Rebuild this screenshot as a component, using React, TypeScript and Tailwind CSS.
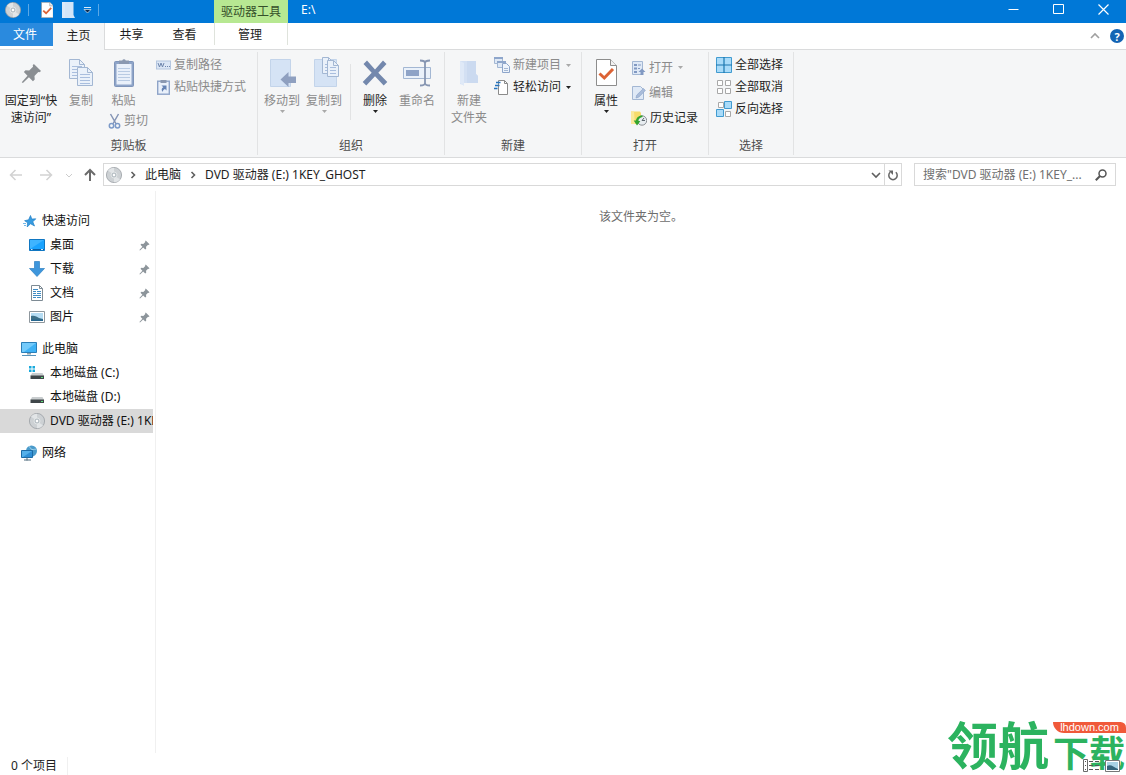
import React from "react";

type Kids = { children?: React.ReactNode };

function Svg({ w, h, children }: Kids & { w: number; h: number }) {
  return (
    <svg width={w} height={h} viewBox={`0 0 ${w} ${h}`} className="block shrink-0" aria-hidden="true">
      {children}
    </svg>
  );
}

/* ---------- icons ---------- */

function Disc() {
  return (
    <Svg w={16} h={16}>
      <circle cx="8" cy="8" r="7.6" fill="#cdd1d4" stroke="#9aa0a4" strokeWidth="0.8" />
      <path d="M8 8 2 3.600A7.300 7.300 0 0 1 8 .8zM8 8l6 4.600A7.300 7.300 0 0 1 8 15.200z" fill="#e2e5e7" />
      <circle cx="8" cy="8" r="3" fill="#b9c1c6" stroke="#eef0f1" strokeWidth="0.700" />
      <circle cx="8" cy="8" r="1.200" fill="#fff" />
    </Svg>
  );
}

function Pin({ size, color }: { size: number; color: string }) {
  return (
    <svg width={size} height={size} viewBox="0 0 22 22" className="block shrink-0" aria-hidden="true">
      <path d="M13.500 1 21 8.400l-1.600 1.400-1.300-.3-4 4 .3 3.800-1.900 1.700-4.200-4.200L2 21l-1.200-.9 6-6.700L3 9.500 4.700 7.700l3.900.2 4-3.900-.3-1.600z" fill={color} />
    </svg>
  );
}

function Page({ x, y, w, h }: { x: number; y: number; w: number; h: number }) {
  const lines = [];
  for (let i = y + 7; i < y + h - 2; i += 3) lines.push(i);
  return (
    <g>
      <path d={`M${x + 0.5} ${y + 0.5}h${w - 6}l5 5v${h - 6}h-${w - 1}z`} fill="#eaf1fa" stroke="#a3b7d3" />
      <path d={`M${x + w - 5.5} ${y + 0.5}v5h5`} fill="none" stroke="#a3b7d3" />
      {lines.map((l) => (
        <path key={l} d={`M${x + 3} ${l + 0.5}h${w - 6}`} stroke="#a9bede" />
      ))}
    </g>
  );
}

function CopyIcon() {
  return (
    <Svg w={26} h={32}>
      <Page x={1} y={2} w={16} h={20} />
      <Page x={9} y={10} w={16} h={19} />
    </Svg>
  );
}

function ClipboardIcon() {
  return (
    <Svg w={22} h={32}>
      <rect x="1.500" y="4.500" width="19" height="25" rx="1" fill="#8ea4c8" stroke="#7f95ba" />
      <rect x="3.500" y="7" width="15" height="20.500" fill="#e9f0fa" />
      <path d="M6 7V3.500h3.200a2 2 0 0 1 3.600 0H16V7z" fill="#8a98b0" />
      <path d="M5 11.500h12M5 14.500h12M5 17.500h12M5 20.500h12M5 23.500h12" stroke="#b9cbe3" />
    </Svg>
  );
}

function ScissorsIcon() {
  return (
    <Svg w={13} h={16}>
      <path d="M2.500 1 8.200 11M10.500 1 4.800 11" stroke="#8494b5" strokeWidth="1.500" />
      <circle cx="3.500" cy="12.700" r="2.200" fill="none" stroke="#7c9ac8" strokeWidth="1.500" />
      <circle cx="9.500" cy="12.700" r="2.200" fill="none" stroke="#7c9ac8" strokeWidth="1.500" />
    </Svg>
  );
}

function PathIcon() {
  return (
    <Svg w={15} h={16}>
      <rect x=".5" y="4" width="14" height="8" fill="#dbe6f5" stroke="#b4c6df" />
      <path d="M2 6l1.500 4L5 6l1.500 4L8 6" fill="none" stroke="#6f86ad" />
      <path d="M9 9.500h1M11 9.500h1M13 9.500h1" stroke="#6f86ad" />
    </Svg>
  );
}

function PasteShortcutIcon() {
  return (
    <Svg w={15} h={16}>
      <rect x="1.700" y="2.200" width="11.600" height="13" fill="#e9f0fa" stroke="#8ea4c8" strokeWidth="1.400" />
      <path d="M4.500 1h6v3h-6z" fill="#8a98b0" />
      <path d="M5.500 6.500h5v5L9 10c-1.500.6-2.200 1.600-2.300 3C5 11 5.500 9.200 7.300 8.300z" fill="#6583b4" />
    </Svg>
  );
}

function MoveIcon() {
  return (
    <Svg w={32} h={32}>
      <path d="M4.500 2.500h20v27h-20z" fill="#d5e3f5" stroke="#c3d4ea" />
      <path d="m14.500 22.500 8-7.500v4.500H30v6.500h-7.500v4z" fill="#8fa0c0" />
    </Svg>
  );
}

function CopyToIcon() {
  return (
    <Svg w={32} h={32}>
      <path d="M6.500 2.500h22v27h-22z" fill="#d5e3f5" stroke="#c3d4ea" />
      <Page x={14} y={0} w={12} h={17} />
      <Page x={19} y={3} w={12} h={17} />
    </Svg>
  );
}

function DeleteIcon() {
  return (
    <Svg w={28} h={32}>
      <path d="M2.500 7 6 3.500l8 9 8-9L25.500 7l-8.200 8.800 9 9.200-3.600 3.500L14 19.300l-8.700 9.200L1.700 25l9-9.200z" fill="#7388ad" />
    </Svg>
  );
}

function RenameIcon() {
  return (
    <Svg w={28} h={32}>
      <path d="M.5 10.500h27v11H.5z" fill="#eaf1fa" stroke="#a3b7d3" />
      <path d="M3 13h13v6H3z" fill="#8ea3c7" />
      <path d="M17 3.500c3 0 5 .5 5 2.500v20c0 2-2 2.500-5 2.500M27 3.500c-3 0-5 .5-5 2.500v20c0 2 2 2.500 5 2.500" fill="none" stroke="#8796b2" strokeWidth="1.800" />
    </Svg>
  );
}

function NewFolderIcon() {
  return (
    <Svg w={22} h={32}>
      <path d="M2 4h16v13l2 2v7H6v2l-4-1z" fill="#d3e0f3" />
      <path d="M9 4h9v13l2 2v7H9z" fill="#cbdaf0" />
      <path d="M2 4l4 2v23l-4-3z" fill="#dfe9f7" />
    </Svg>
  );
}

function NewItemIcon() {
  return (
    <Svg w={16} h={16}>
      <path d="M.5.5h8v6h-8z" fill="#dfe9f6" stroke="#a3b7d3" />
      <path d="M0 1h9" stroke="#8ea6cb" strokeWidth="2" />
      <path d="M3.500 4.500h8v6h-8z" fill="#dfe9f6" stroke="#a3b7d3" />
      <path d="M3 5h9" stroke="#8ea6cb" strokeWidth="2" />
      <path d="M8.500 6.500h4l3 3v6h-7z" fill="#edf3fb" stroke="#8ea6cb" />
      <path d="M10 11.500h4M10 13.500h4" stroke="#a3b7d3" />
    </Svg>
  );
}

function EasyAccessIcon() {
  return (
    <Svg w={16} h={16}>
      <path d="M4.500 1.500h6l3 3v11h-9z" fill="#fff" stroke="#8b8b8b" />
      <path d="M10.500 1.500v3h3" fill="none" stroke="#8b8b8b" />
      <path d="M2 3.500h4.500M1 6.500h4.500M0 9.500h3.500" stroke="#2673bd" strokeWidth="1.500" />
    </Svg>
  );
}

function Check({ small }: { small?: boolean }) {
  return (
    <svg width={small ? 13 : 24} height={small ? 16 : 32} viewBox={small ? "0 2 22 27" : "0 0 24 32"} className="block shrink-0" aria-hidden="true">
      <path d="M2.500 2.500h14l6 6v20h-20z" fill="#fff" stroke="#8d8d8d" />
      <path d="M16.500 2.500v6h6" fill="#f1f1f1" stroke="#8d8d8d" />
      <path d="m5.500 16.500 4.800 4.500L19 12" fill="none" stroke="#dc6234" strokeWidth="3" />
    </svg>
  );
}

function OpenIcon() {
  return (
    <Svg w={15} h={16}>
      <path d="M1.500 1.500h10v13h-10z" fill="#dfe9f6" stroke="#a3b7d3" />
      <path d="M3 4h3v2H3zM3 7.500h3v2H3zM3 11h3v2H3z" fill="#8199c2" />
      <path d="M7 5h3M7 8.500h2" stroke="#8199c2" />
      <path d="M11 8.500 14.500 12H12.500v3h-3v-3h-2z" fill="#8199c2" />
    </Svg>
  );
}

function EditIcon() {
  return (
    <Svg w={15} h={16}>
      <path d="M1.500 1.500h8l3 3v10h-11z" fill="#dfe9f6" stroke="#a3b7d3" />
      <path d="m5 13 .8-3 6.700-6.500 1.800 2-6.500 6.600z" fill="#a9bcda" stroke="#8ea6cb" strokeWidth=".7" />
    </Svg>
  );
}

function HistoryIcon() {
  return (
    <Svg w={16} h={16}>
      <path d="M0 1.500h9l1 1.500v11H0z" fill="#f7dc6b" />
      <path d="M0 1.500h3l1 12.500H0z" fill="#fbe99a" />
      <circle cx="11" cy="10.500" r="4.700" fill="#e8edf1" stroke="#8a8f94" />
      <path d="M11 10.500 13 8M11 10.500h3" stroke="#5e6870" />
      <path d="M11.500 5.500C7.500 5.500 5.300 8 5 10.500H2.700L6 15.500l3.300-4.200-2-.6c.6-2 2-3.300 4.200-3.700z" fill="#33a42f" />
    </Svg>
  );
}

function SelectIcon({ kind }: { kind: "all" | "none" | "invert" }) {
  if (kind === "all")
    return (
      <Svg w={16} h={16}>
        <path d="M.5.5h15v15H.5z" fill="#a9dbf9" stroke="#419bd0" />
        <path d="M8 0v16M0 8h16" stroke="#1c77b0" strokeWidth="1.200" />
      </Svg>
    );
  if (kind === "none")
    return (
      <Svg w={16} h={16}>
        <path d="M1.500 1.500h5v5h-5zM9.500 1.500h5v5h-5zM1.500 9.500h5v5h-5zM9.500 9.500h5v5h-5z" fill="#fff" stroke="#a8a8a8" />
      </Svg>
    );
  return (
    <Svg w={16} h={16}>
      <path d="M2.500 1.500h5v5h-5zM9.500 10.500h5v5h-5z" fill="#fff" stroke="#a8a8a8" />
      <path d="M8.500.5h7v7h-7zM.5 8.500h7v7h-7z" fill="#a9dbf9" stroke="#419bd0" />
    </Svg>
  );
}

function Caret({ dim }: { dim?: boolean }) {
  return (
    <Svg w={5} h={3}>
      <path d="M0 0h5L2.500 3z" fill={dim ? "#a9a9a9" : "#222"} />
    </Svg>
  );
}

function Star() {
  return (
    <Svg w={16} h={16}>
      <path d="m9.500 2.500 1.300 3.600 4-.3-3 3 1.700 4.200-4-2.300-3.300 3.300.4-4.300-3-2 4-.9z" fill="#379be0" stroke="#2380c6" strokeWidth=".7" />
      <path d="M2 10.500h3M3 12.500h2" stroke="#74b8e8" />
    </Svg>
  );
}

function DesktopIcon() {
  return (
    <Svg w={16} h={16}>
      <path d="M.5 2.500h15v11H.5z" fill="#1aa3ff" stroke="#1177c2" />
      <path d="M1 3h14L1 12z" fill="#3fb4ff" />
      <path d="M1 12.500h14" stroke="#0b5fa5" />
      <path d="M2 12.500h1.500M12 12.500h2" stroke="#cfeaff" />
    </Svg>
  );
}

function DownloadIcon() {
  return (
    <Svg w={16} h={16}>
      <path d="M5.500.5h5v7h5L8 15.500.5 7.500h5z" fill="#3e96dc" stroke="#2d7fc1" strokeWidth=".7" />
    </Svg>
  );
}

function DocIcon() {
  return (
    <Svg w={16} h={16}>
      <path d="M2.500.5h8l3 3v12h-11z" fill="#fff" stroke="#7e8b94" />
      <path d="M10.500.5v3h3" fill="none" stroke="#7e8b94" />
      <path d="M4 4.500h5M4 6.500h3M8 6.500h4M4 8.500h3M8 8.500h4M4 10.500h8M4 12.500h3M8 12.500h4" stroke="#3f8cc4" />
    </Svg>
  );
}

function PictureIcon() {
  return (
    <Svg w={16} h={16}>
      <path d="M.5 2.500h15v11H.5z" fill="#fff" stroke="#8e979d" />
      <path d="M2 4h12v8H2z" fill="#b5dcf3" />
      <path d="M2 7c3-1 6 .5 8 2l4 1v2H2z" fill="#3c6f87" />
      <path d="M2 10.500h12V12H2z" fill="#27678f" />
    </Svg>
  );
}

function PcIcon() {
  return (
    <Svg w={16} h={16}>
      <path d="M.5 1.500h15v10H.5z" fill="#3fb2f5" stroke="#2b7fb8" />
      <path d="M1 2h14L3 11H1z" fill="#74cbfb" />
      <path d="M6 12h4v1.500H6z" fill="#8da0ab" />
      <path d="M1 14.500h14" stroke="#5793ba" />
    </Svg>
  );
}

function DriveIcon({ windows }: { windows?: boolean }) {
  return (
    <Svg w={16} h={16}>
      {windows && <path d="M0 1h2.500v2.500H0zM3.500 1H6v2.500H3.500zM0 4.500h2.500V7H0zM3.500 4.500H6V7H3.500z" fill="#19a9dc" />}
      <path d="M3 8h10.500l1.500 3H1.500z" fill="#c9cdcf" />
      <path d="M1.500 10.500H15V14H1.500z" fill="#3f4649" />
      <path d="M12 12.500h2" stroke="#5fe07a" />
    </Svg>
  );
}

function NetworkIcon() {
  return (
    <Svg w={16} h={16}>
      <circle cx="10.500" cy="6" r="5.500" fill="#4a9bcb" />
      <path d="M8 1.500c2 1 1 2.500 3 3s3-1 4 0" stroke="#a5d3ea" fill="none" />
      <path d="M.5 5.500h11v7H.5z" fill="#2f8fd6" stroke="#1d6ba6" />
      <path d="M1 6h10l-9 6H1z" fill="#55b0ea" />
      <path d="M6 12.500v3M3 15h7" stroke="#506c7e" />
    </Svg>
  );
}

function Chevron({ dir, color = "#5f5f5f" }: { dir: "right" | "down" | "up"; color?: string }) {
  const d = dir === "right" ? "m3.500 2 3 3-3 3" : dir === "down" ? "m1 3 4 4 4-4" : "m1 7 4-4 4 4";
  return (
    <Svg w={10} h={10}>
      <path d={d} fill="none" stroke={color} strokeWidth="1.600" />
    </Svg>
  );
}

function Arrow({ dir, color }: { dir: "left" | "right" | "up"; color: string }) {
  const d = {
    left: "M13 7H1.500M6.500 2l-5 5 5 5",
    right: "M1 7h11.500M7.500 2l5 5-5 5",
    up: "M7 13V2M2 7l5-5 5 5",
  }[dir];
  return (
    <Svg w={14} h={14}>
      <path d={d} fill="none" stroke={color} strokeWidth={dir === "up" ? 2 : 1.500} />
    </Svg>
  );
}

/* ---------- ribbon ---------- */

function Group({ label, width, children }: Kids & { label: string; width: string }) {
  return (
    <section aria-label={label} className={`${width} my-[2px] flex shrink-0 flex-col border-r border-[#e2e3e4]`}>
      <div className="flex h-[86px] items-start">{children}</div>
      <div className="text-center leading-4 text-[#4c4c4c]">{label}</div>
    </section>
  );
}

function Big({ icon, lines, width, dim, caret }: { icon: React.ReactNode; lines: string[]; width: string; dim?: boolean; caret?: boolean }) {
  return (
    <button type="button" className={`${width} ${dim ? "text-[#8b8b8b]" : "text-[#1e1e1e]"} flex shrink-0 flex-col items-center pt-[5px]`}>
      {icon}
      <span className="mt-[3px] flex flex-col items-center leading-[17px] whitespace-nowrap">
        {lines.map((l) => (
          <span key={l}>{l}</span>
        ))}
      </span>
      {caret && (
        <span className="pt-px">
          <Caret dim={dim} />
        </span>
      )}
    </button>
  );
}

function Small({ icon, label, dim, caret, tall }: { icon: React.ReactNode; label: string; dim?: boolean; caret?: boolean; tall?: boolean }) {
  return (
    <button type="button" className={`${dim ? "text-[#8b8b8b]" : "text-[#1e1e1e]"} ${tall ? "h-[25px]" : "h-[22px]"} flex items-center gap-[3px] whitespace-nowrap`}>
      {icon}
      <span>{label}</span>
      {caret && (
        <span className="pl-[2px]">
          <Caret dim={dim} />
        </span>
      )}
    </button>
  );
}

/* ---------- navigation pane ---------- */

function NavItem({ icon, label, child, pinned, active }: { icon: React.ReactNode; label: string; child?: boolean; pinned?: boolean; active?: boolean }) {
  return (
    <li>
      <a
        href="#"
        className={`${child ? "pl-[29px]" : "pl-[21px]"} ${active ? "bg-[#d9d9d9]" : ""} mr-[2px] flex h-6 items-center gap-[5px] overflow-hidden whitespace-nowrap text-[#111]`}
      >
        {icon}
        <span className="min-w-0 flex-1 overflow-hidden">{label}</span>
        {pinned && (
          <span className="pr-[3px]">
            <Pin size={11} color="#8d959b" />
          </span>
        )}
      </a>
    </li>
  );
}

export default function App() {
  return (
    <div className="relative flex min-h-screen flex-col bg-white font-['Noto_Sans','Noto_Sans_CJK_SC',sans-serif] text-xs text-[#1e1e1e] select-none">
      <header className="flex h-[23px] items-stretch bg-[#0078d7] text-white">
        <div className="flex w-[214px] shrink-0 items-center pb-[3px] pl-[5px]">
          <Disc />
          <span className="ml-[7px] h-3 w-px bg-[#5ba8e6]" />
          <button type="button" aria-label="属性" className="ml-[11px]">
            <Check small />
          </button>
          <button type="button" aria-label="新建文件夹" className="ml-[9px]">
            <Svg w={13} h={16}>
              <path d="M0 0h11.500v13l1.500 3H0z" fill="#d3e5f8" />
              <path d="M0 0h3v16H0z" fill="#dbe9f9" />
            </Svg>
          </button>
          <button type="button" aria-label="自定义快速访问工具栏" className="ml-2">
            <Svg w={9} h={8}>
              <path d="M1 1.500h7" stroke="#dcecfa" />
              <path d="M1 3.500h7L4.500 7z" fill="#082b50" stroke="#dcecfa" strokeWidth=".7" />
            </Svg>
          </button>
          <span className="ml-[6px] h-3 w-px bg-[#5ba8e6]" />
        </div>
        <div className="flex w-[74px] shrink-0 items-center justify-center bg-[#b7e892] text-[#35502a]">驱动器工具</div>
        <h1 className="flex-1 pl-[13px] leading-5">E:\</h1>
        <div className="flex pb-1">
          <button type="button" aria-label="最小化" className="flex w-[45px] items-center justify-center">
            <Svg w={11} h={11}>
              <path d="M.5 5.500h10" stroke="#fff" />
            </Svg>
          </button>
          <button type="button" aria-label="最大化" className="flex w-[45px] items-center justify-center">
            <Svg w={11} h={11}>
              <path d="M.5.5h10v9h-10z" fill="none" stroke="#fff" />
            </Svg>
          </button>
          <button type="button" aria-label="关闭" className="flex w-[45px] items-center justify-center">
            <Svg w={11} h={11}>
              <path d="m.5.5 10 10M10.500.5l-10 10" stroke="#fff" strokeWidth="1.200" />
            </Svg>
          </button>
        </div>
      </header>

      <div className="flex h-[27px] border-b border-[#dadbdc]">
        <button type="button" className="h-[23px] w-[53px] shrink-0 bg-[#2a8ade] pr-[3px] text-white">文件</button>
        <button type="button" className="-mb-px w-[52px] shrink-0 border-r border-[#dadbdc] bg-[#f5f6f7] pb-[2px]">主页</button>
        <button type="button" className="w-[53px] shrink-0 pb-[2px]">共享</button>
        <button type="button" className="w-[53px] shrink-0 pb-[2px]">查看</button>
        <button type="button" className="ml-[3px] mb-1 w-[74px] shrink-0 border-x border-[#dfe3dc] pt-[2px] pr-[2px]">管理</button>
        <div className="flex flex-1 items-center justify-end gap-[10px] pr-[2px]">
          <button type="button" aria-label="最小化功能区">
            <Chevron dir="up" color="#a0a0a0" />
          </button>
          <button type="button" aria-label="帮助" className="flex size-[14px] items-center justify-center rounded-full bg-[#1464b4] text-[11px] leading-none font-bold text-white">?</button>
        </div>
      </div>

      <div className="flex h-[108px] overflow-hidden border-b border-[#dadbdc] bg-[#f5f6f7]">
        <Group label="剪贴板" width="w-[258px]">
          <Big width="w-[62px]" icon={<span className="flex h-8 items-center"><Pin size={21} color="#8a8e92" /></span>} lines={["固定到“快", "速访问”"]} />
          <Big width="w-[38px]" dim icon={<CopyIcon />} lines={["复制"]} />
          <div className="flex w-[56px] shrink-0 flex-col items-start pl-2">
            <Big width="w-[31px]" dim icon={<ClipboardIcon />} lines={["粘贴"]} />
            <span className="pt-px">
              <Small dim icon={<ScissorsIcon />} label="剪切" />
            </span>
          </div>
          <div className="flex flex-col pt-[2px]">
            <Small dim icon={<PathIcon />} label="复制路径" />
            <Small dim icon={<PasteShortcutIcon />} label="粘贴快捷方式" />
          </div>
        </Group>
        <Group label="组织" width="w-[187px]">
          <span className="w-[3px] shrink-0" />
          <Big width="w-[42px]" dim caret icon={<MoveIcon />} lines={["移动到"]} />
          <Big width="w-[42px]" dim caret icon={<CopyToIcon />} lines={["复制到"]} />
          <span className="mr-[3px] ml-[5px] mt-3 h-14 w-px shrink-0 bg-[#e2e3e4]" />
          <Big width="w-[42px]" caret icon={<DeleteIcon />} lines={["删除"]} />
          <Big width="w-[42px]" dim icon={<RenameIcon />} lines={["重命名"]} />
        </Group>
        <Group label="新建" width="w-[137px]">
          <span className="w-[3px] shrink-0" />
          <Big width="w-[42px]" dim icon={<NewFolderIcon />} lines={["新建", "文件夹"]} />
          <div className="flex flex-col pt-[2px] pl-1">
            <Small dim caret icon={<NewItemIcon />} label="新建项目" />
            <Small caret icon={<EasyAccessIcon />} label="轻松访问" />
          </div>
        </Group>
        <Group label="打开" width="w-[127px]">
          <span className="w-[3px] shrink-0" />
          <Big width="w-[42px]" caret icon={<Check />} lines={["属性"]} />
          <div className="flex flex-col pt-[3px] pl-1">
            <Small dim caret tall icon={<OpenIcon />} label="打开" />
            <Small dim tall icon={<EditIcon />} label="编辑" />
            <Small tall icon={<HistoryIcon />} label="历史记录" />
          </div>
        </Group>
        <Group label="选择" width="w-[85px]">
          <div className="flex flex-col pt-[2px] pl-[7px]">
            <Small icon={<SelectIcon kind="all" />} label="全部选择" />
            <Small icon={<SelectIcon kind="none" />} label="全部取消" />
            <Small icon={<SelectIcon kind="invert" />} label="反向选择" />
          </div>
        </Group>
      </div>

      <div className="flex h-[33px] shrink-0 items-center pr-[10px] pl-[9px]">
        <div className="flex w-[94px] shrink-0 items-center">
          <button type="button" aria-label="后退"><Arrow dir="left" color="#d2d2d2" /></button>
          <button type="button" aria-label="前进" className="ml-4"><Arrow dir="right" color="#d2d2d2" /></button>
          <button type="button" aria-label="最近浏览的位置" className="ml-3"><Svg w={8} h={8}><path d="m1 3 3 3 3-3" fill="none" stroke="#ccc" /></Svg></button>
          <button type="button" aria-label="上移" className="ml-[10px]"><Arrow dir="up" color="#6b6b6b" /></button>
        </div>
        <nav aria-label="地址" className="flex h-[23px] min-w-0 flex-1 items-center border border-[#d9d9d9] pl-[2px]">
          <Disc />
          <span className="mx-[6px]"><Chevron dir="right" /></span>
          <a href="#" className="ml-px">此电脑</a>
          <span className="mx-[7px]"><Chevron dir="right" /></span>
          <a href="#" className="min-w-0 flex-1 truncate">DVD 驱动器 (E:) 1KEY_GHOST</a>
          <button type="button" aria-label="上一个位置" className="mr-[3px]"><Chevron dir="down" /></button>
          <button type="button" aria-label="刷新" className="flex h-full w-[17px] items-center justify-center border-l border-[#d9d9d9]">
            <Svg w={12} h={12}>
              <path d="M8.800 3.300A4.200 4.200 0 1 1 3.200 3.300" fill="none" stroke="#666" strokeWidth="1.500" />
              <path d="M1.500 1.500H6V6z" fill="#666" />
            </Svg>
          </button>
        </nav>
        <form className="ml-3 flex h-[23px] w-[202px] shrink-0 items-center border border-[#d9d9d9] pr-2 pl-2">
          <input
            type="text"
            aria-label="搜索"
            placeholder={'搜索"DVD 驱动器 (E:) 1KEY_...'}
            className="min-w-0 flex-1 outline-none placeholder:text-[#707070]"
          />
          <button type="button" aria-label="开始搜索">
            <Svg w={12} h={12}>
              <circle cx="7.500" cy="4.500" r="3.500" fill="none" stroke="#555" strokeWidth="1.500" />
              <path d="M5 7 .8 11.200" stroke="#555" strokeWidth="2" />
            </Svg>
          </button>
        </form>
      </div>

      <div className="flex flex-1">
        <nav aria-label="导航窗格" className="w-[156px] shrink-0 border-r border-[#f0f0f0] pt-[18px]">
          <ul>
            <NavItem icon={<Star />} label="快速访问" />
            <NavItem child pinned icon={<DesktopIcon />} label="桌面" />
            <NavItem child pinned icon={<DownloadIcon />} label="下载" />
            <NavItem child pinned icon={<DocIcon />} label="文档" />
            <NavItem child pinned icon={<PictureIcon />} label="图片" />
          </ul>
          <ul className="mt-2">
            <NavItem icon={<PcIcon />} label="此电脑" />
            <NavItem child icon={<DriveIcon windows />} label="本地磁盘 (C:)" />
            <NavItem child icon={<DriveIcon />} label="本地磁盘 (D:)" />
            <NavItem child active icon={<Disc />} label="DVD 驱动器 (E:) 1KEY_GHOST" />
          </ul>
          <ul className="mt-2">
            <NavItem icon={<NetworkIcon />} label="网络" />
          </ul>
        </nav>
        <main className="flex-1 pt-[18px] text-center leading-4 text-[#6d6d6d]">该文件夹为空。</main>
      </div>

      <footer className="flex h-[22px] items-end pl-[11px]">
        <div className="border-r border-[#f0f0f0] pr-[10px] leading-[18px]">0 个项目</div>
      </footer>

      <div className="pointer-events-none absolute right-0 bottom-[6px] flex items-end font-['Noto_Sans_CJK_SC',sans-serif] font-bold text-[#2cb35f]">
        <span className="text-[51px] leading-[52px]">领航</span>
        <div className="ml-1 flex flex-col">
          <span className="flex h-[11px] w-[73px] items-center justify-center rounded-tr-md rounded-bl-xl bg-[#f0593a] font-['Liberation_Sans',sans-serif] text-[11px] leading-none font-normal text-white">lhdown.com</span>
          <span className="text-[36px] leading-9">下载</span>
        </div>
      </div>
      <div className="absolute right-[6px] bottom-[2px] flex gap-[6px]">
        <button type="button" aria-label="详细信息">
          <Svg w={16} h={14}>
            <path d="M.5.500h4v12h-4z" fill="#fff" stroke="#6a6a6a" />
            <path d="M2 2.500h1M2 6.500h1M2 10.500h1M6 2.500h4M12 2.500h4M6 6.500h4M12 6.500h4M6 10.500h4M12 10.500h4" stroke="#555" />
          </Svg>
        </button>
        <button type="button" aria-label="大图标">
          <Svg w={15} h={14}>
            <path d="M.5 1.500h14v11H.5z" fill="#fff" stroke="#777" />
            <path d="M2 3h11v8H2z" fill="#a9d2e5" />
            <path d="M2 7c4-2 6 1 11 3v1H2z" fill="#35647b" />
          </Svg>
        </button>
      </div>
    </div>
  );
}
